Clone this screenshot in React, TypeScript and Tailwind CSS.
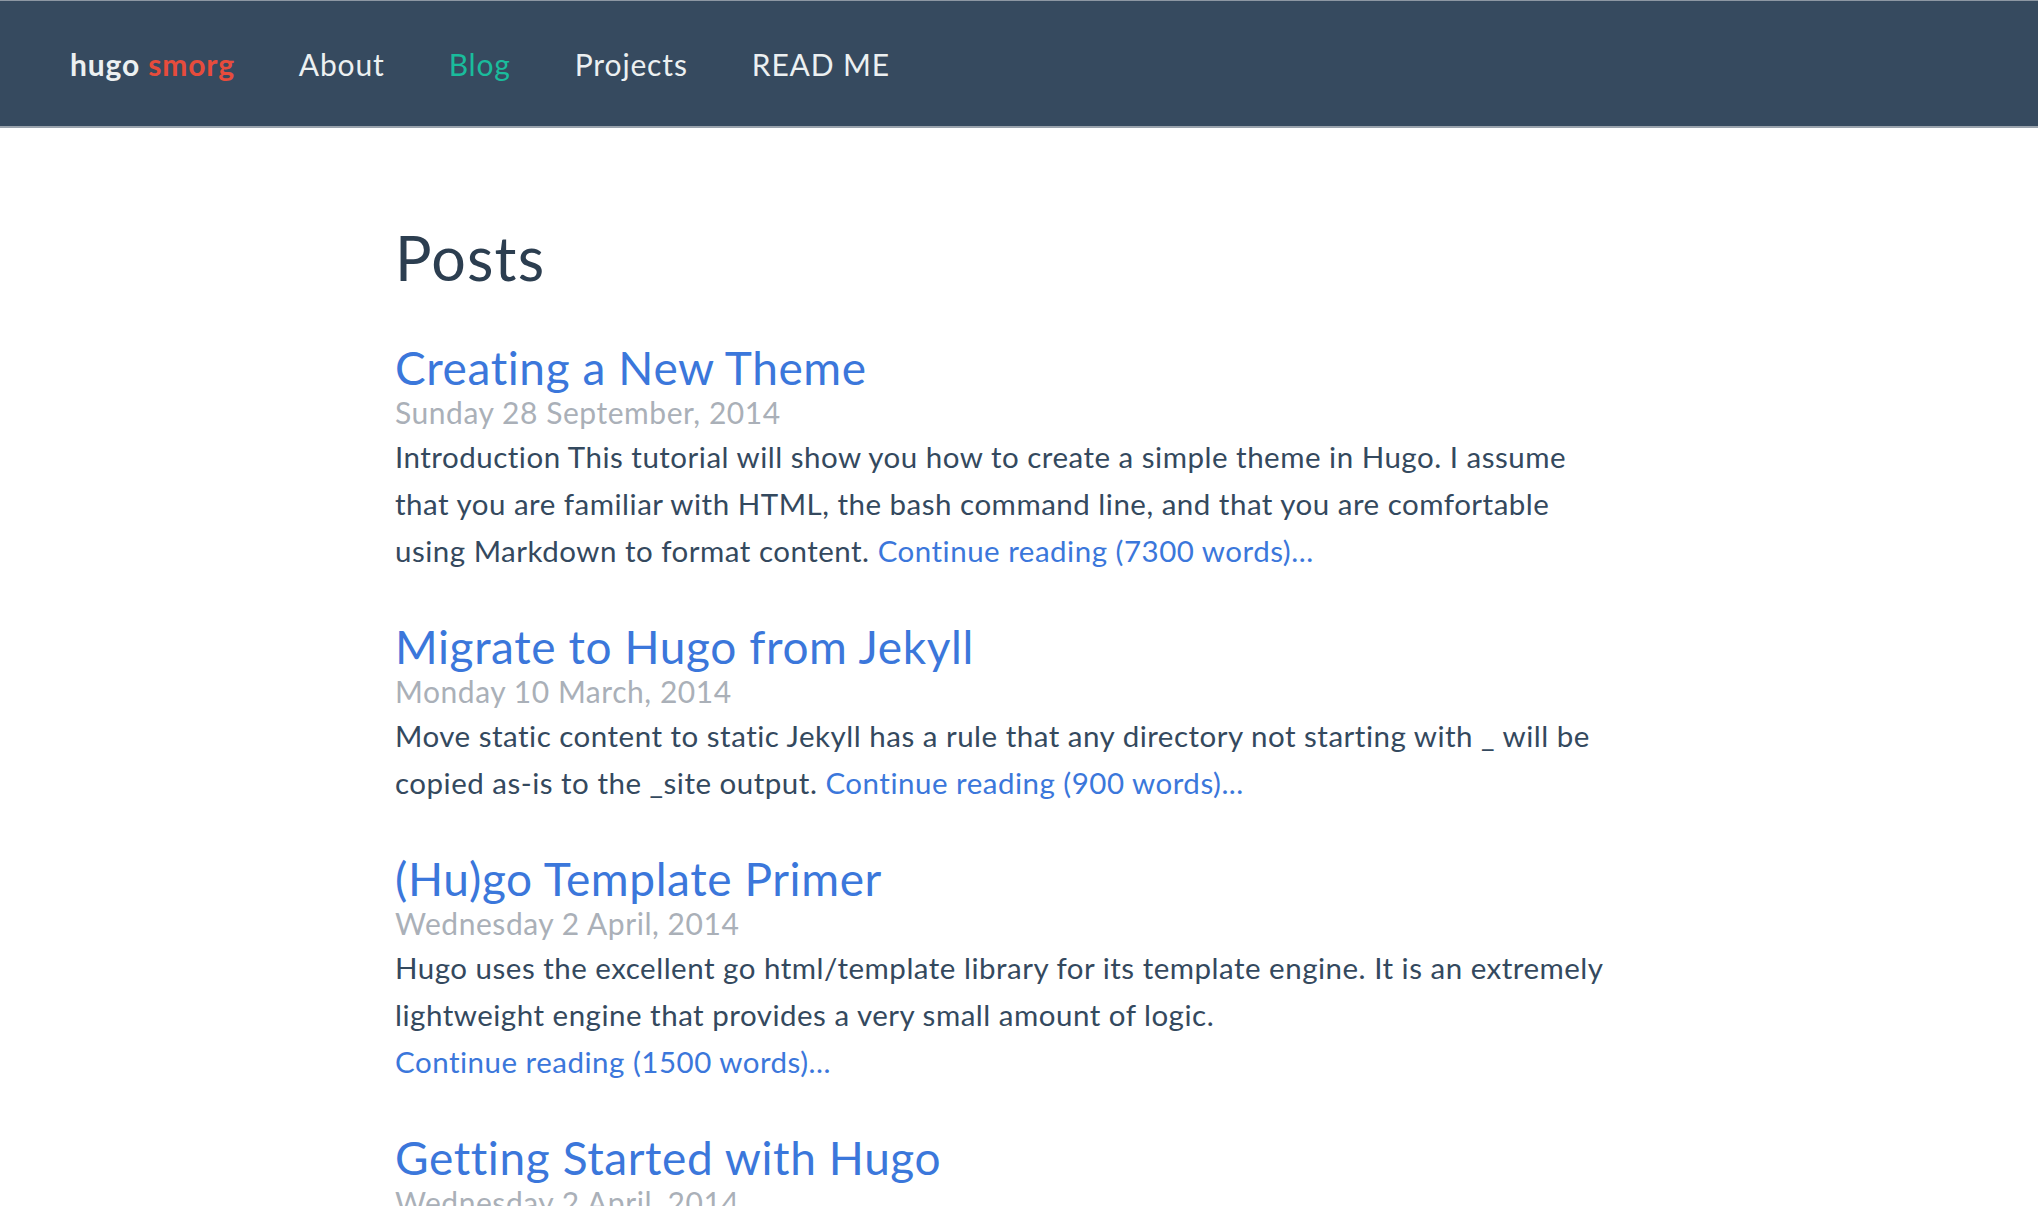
import React from "react";

const posts = [
  {
    title: "Creating a New Theme",
    date: "Sunday 28 September, 2014",
    summary:
      "Introduction This tutorial will show you how to create a simple theme in Hugo. I assume that you are familiar with HTML, the bash command line, and that you are comfortable using Markdown to format content.",
    words: "7300",
  },
  {
    title: "Migrate to Hugo from Jekyll",
    date: "Monday 10 March, 2014",
    summary:
      "Move static content to static Jekyll has a rule that any directory not starting with _ will be copied as-is to the _site output.",
    words: "900",
  },
  {
    title: "(Hu)go Template Primer",
    date: "Wednesday 2 April, 2014",
    summary:
      "Hugo uses the excellent go html/template library for its template engine. It is an extremely lightweight engine that provides a very small amount of logic.",
    words: "1500",
  },
  {
    title: "Getting Started with Hugo",
    date: "Wednesday 2 April, 2014",
    summary:
      "Step 1. Install Hugo Go to Hugo releases and download the appropriate version for your OS and architecture.",
    words: "1000",
  },
];

export default function App() {
  return (
    <div className="min-h-screen bg-white" style={{ fontFamily: "Lato, 'Open Sans', sans-serif" }}>
      <nav className="h-[128px] bg-[#364a5f] border-t border-b-2 border-t-[#8d97a3] border-b-[#9aa3ad] flex items-center pl-[70px] gap-[64px] text-[30px] leading-[36px] tracking-[0.85px] text-[#ecf0f1]">
        <a className="font-bold">
          hugo <span className="text-[#e74c3c]">smorg</span>
        </a>
        <a>About</a>
        <a className="text-[#1abc9c]">Blog</a>
        <a>Projects</a>
        <a>READ ME</a>
      </nav>
      <main className="w-[1248px] mx-auto pt-[93px]">
        <h1 className="text-[61px] leading-[73px] tracking-[1.2px] text-[#2c3e50] mb-[48px]">Posts</h1>
        <div className="flex flex-col gap-[47px] max-w-[1225px]">
          {posts.map((p) => (
            <article key={p.title}>
              <h2 className="text-[46px] leading-[51px] tracking-[0.6px] text-[#3b77db]">{p.title}</h2>
              <div className="text-[30px] leading-[38px] tracking-[0.55px] text-[#aab0b8] mb-[2px]">{p.date}</div>
              <p className="text-[29.5px] leading-[47px] tracking-[0.5px] text-[#34495e]">
                {p.summary}{" "}
                <a className="text-[#3b77db] whitespace-nowrap">Continue reading ({p.words} words)...</a>
              </p>
            </article>
          ))}
        </div>
      </main>
    </div>
  );
}
